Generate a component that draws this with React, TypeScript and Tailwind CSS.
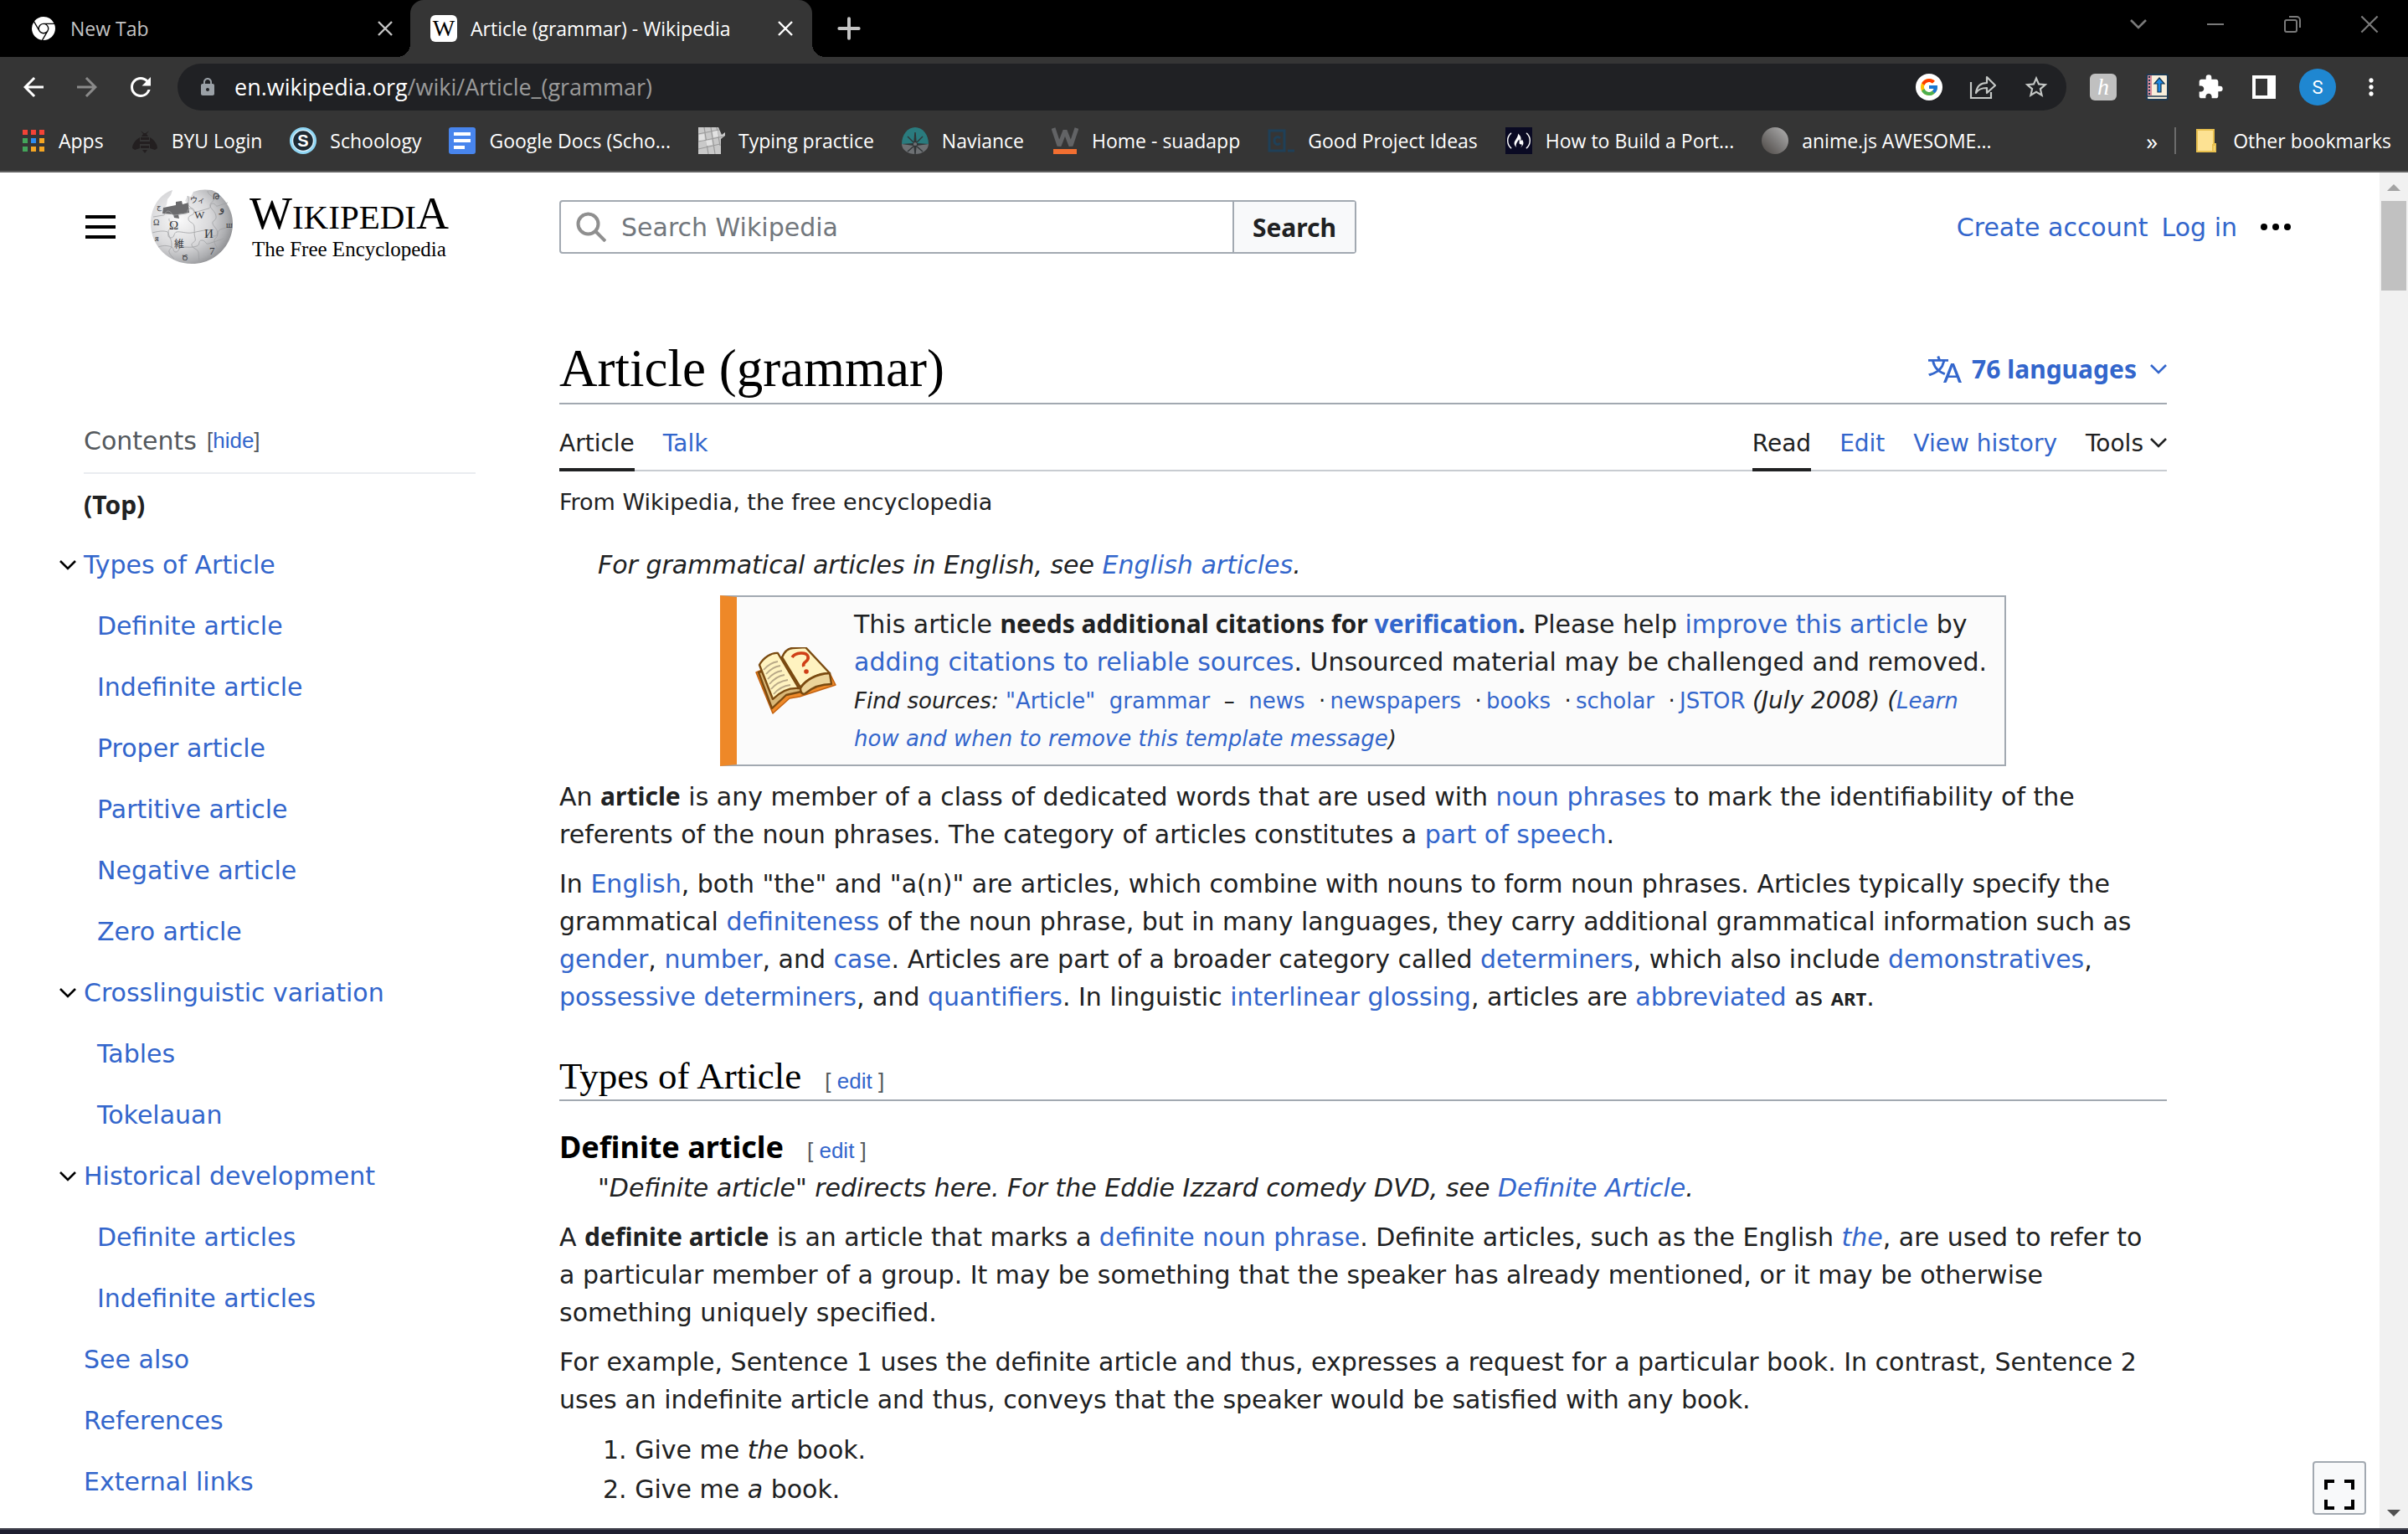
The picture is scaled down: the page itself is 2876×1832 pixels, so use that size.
import React from 'react'
import { FcGoogle } from 'react-icons/fc'
import { SiGooglechrome, SiFreecodecamp } from 'react-icons/si'
import { MdArrowBack, MdArrowForward, MdExtension, MdLock, MdMoreVert, MdRefresh, MdStarBorder } from 'react-icons/md'

interface LinkProps {
  children: React.ReactNode
  className?: string
}

const A: React.FC<LinkProps> = ({ children, className = '' }) => (
  <a href="#" className={`text-[#3366cc] hover:underline ${className}`}>
    {children}
  </a>
)

const B: React.FC<LinkProps> = ({ children }) => (
  <b className="font-['Noto_Sans',sans-serif] text-[30px] leading-none font-bold">{children}</b>
)

const Chevron: React.FC<{ className?: string }> = ({ className = '' }) => (
  <svg className={className} viewBox="0 0 20 12" fill="none" stroke="currentColor" strokeWidth={2.6}>
    <path d="M1 1l9 9 9-9" />
  </svg>
)

const Cross: React.FC<{ className?: string; width?: number }> = ({ className = '', width = 2.4 }) => (
  <svg className={className} viewBox="0 0 20 20" fill="none" stroke="currentColor" strokeWidth={width}>
    <path d="M2 2l16 16M18 2L2 18" />
  </svg>
)

/* ---------- bookmark icons ---------- */

const AppsIcon = () => (
  <svg viewBox="0 0 28 28" className="h-7 w-7">
    {['#f44336', '#f44336', '#f44336', '#43a55a', '#2d8cf0', '#f5a623', '#43a55a', '#f5a623', '#f5a623'].map((c, i) => (
      <rect key={i} x={(i % 3) * 10 + 1} y={Math.floor(i / 3) * 10 + 1} width={6} height={6} fill={c} />
    ))}
  </svg>
)

const BeeIcon = () => (
  <svg viewBox="0 0 32 32" className="h-8 w-8" fill="#231f20">
    <path d="M11 4l3 4-2 3h8l-2-3 3-4-4 3h-2z" />
    <path d="M10 12C5 15 1 20 1 25l3 2 6-2zM22 12c5 3 9 8 9 13l-3 2-6-2z" />
    <path d="M11 12h10v3H11zM10 17h12v3H10zM11 22h10v3H11zM13 27h6l-3 4z" />
  </svg>
)

const SchoologyIcon = () => (
  <svg viewBox="0 0 32 32" className="h-8 w-8">
    <circle cx="16" cy="16" r="16" fill="#8fd6f4" />
    <circle cx="16" cy="16" r="12.5" fill="#1f2a33" stroke="#d5eefa" strokeWidth="1.5" />
    <text x="16" y="23" fontSize="20" fontWeight="bold" textAnchor="middle" fill="#fff" fontFamily="Liberation Sans, sans-serif">S</text>
  </svg>
)

const DocsIcon = () => (
  <svg viewBox="0 0 32 32" className="h-8 w-8">
    <rect width="32" height="32" rx="3" fill="#4885ed" />
    <path d="M6 6h20v4H6zM6 14h20v4H6zM6 22h13v4H6z" fill="#fff" />
  </svg>
)

const KeysIcon = () => (
  <svg viewBox="0 0 32 32" className="h-8 w-8">
    <rect width="32" height="32" fill="#c9c9c9" />
    <path d="M0 8l30-6M0 17l30-6M0 26l26-6M7 0l5 32M15 0l5 32M22 0l4 22" stroke="#9a9a9a" strokeWidth="1.2" />
    <path d="M1 9l6-1 1 7-7 1zM9 16l7-1 1 6-7 1zM17 5l6-1 1 7-6 1z" fill="#e2e2e2" />
    <path d="M24 0h8v6l-4 3zM27 14l5-4v22h-5z" fill="#353535" />
  </svg>
)

const NavianceIcon = () => (
  <svg viewBox="0 0 32 32" className="h-8 w-8">
    <path d="M0 20a16 20 0 0132 0z" fill="#2a7b7e" />
    <path d="M0 20h32a16 12 0 01-32 0z" fill="#6d7073" />
    <path d="M16 6l1 12-1 2-1-2zM7 11l8 8M25 11l-8 8M16 32l1-10h-2zM7 29l8-7M25 29l-8-7" fill="#303436" stroke="#303436" strokeWidth="1.4" />
    <path d="M0 20l14-1v3zM32 20l-14-1v3z" fill="#303436" />
    <circle cx="16" cy="20" r="2" fill="#6d7073" />
  </svg>
)

const WeeblyIcon = () => (
  <svg viewBox="0 0 32 32" className="h-8 w-8">
    <path d="M2 1l7 21 7-18 7 18 7-21" fill="none" stroke="#626365" strokeWidth="5" strokeLinejoin="bevel" />
    <rect x="2" y="26" width="28" height="6" fill="#f26f31" />
  </svg>
)

const CodecademyIcon = () => (
  <svg viewBox="0 0 32 32" className="h-8 w-8" fill="none" stroke="#1f4058" strokeWidth="3">
    <rect x="2" y="4" width="18" height="24" />
    <path d="M15 13c-3-3-7-1-7 3s4 6 7 3M24 28h8" />
  </svg>
)

const CampIcon = () => (
  <span className="flex h-8 w-8 items-center justify-center bg-[#0a0a23]">
    <SiFreecodecamp className="h-7 w-7 text-white" />
  </span>
)

const SphereIcon = () => <span className="h-8 w-8 rounded-full bg-linear-to-bl from-[#b4b4b4] via-[#7d7b7a] to-[#4b4643]" />

const bookmarks = [
  { label: 'Apps', icon: <AppsIcon /> },
  { label: 'BYU Login', icon: <BeeIcon /> },
  { label: 'Schoology', icon: <SchoologyIcon /> },
  { label: 'Google Docs (Scho...', icon: <DocsIcon /> },
  { label: 'Typing practice', icon: <KeysIcon /> },
  { label: 'Naviance', icon: <NavianceIcon /> },
  { label: 'Home - suadapp', icon: <WeeblyIcon /> },
  { label: 'Good Project Ideas', icon: <CodecademyIcon /> },
  { label: 'How to Build a Port...', icon: <CampIcon /> },
  { label: 'anime.js AWESOME...', icon: <SphereIcon /> },
]

/* ---------- browser chrome ---------- */

const TabStrip = () => (
  <div className="flex h-[68px] items-stretch justify-between bg-black">
    <div className="flex items-stretch">
      <div className="flex w-[490px] items-center pr-3.5 pl-[38px] text-[#c4c4c4]">
        <span className="flex h-8 w-8 items-center">
          <SiGooglechrome className="h-7 w-7 text-white" />
        </span>
        <span className="ml-3.5 flex-1">New Tab</span>
        <button type="button" aria-label="Close New Tab" className="flex h-8 w-8 items-center justify-center">
          <Cross className="h-5 w-5" />
        </button>
      </div>
      <div className="relative flex w-[480px] items-center rounded-t-2xl bg-[#353535] pr-4 pl-6 text-white">
        <span className="absolute bottom-0 -left-4 h-4 w-4 bg-[radial-gradient(circle_at_0_0,transparent_16px,#353535_16px)]" />
        <span className="absolute -right-4 bottom-0 h-4 w-4 bg-[radial-gradient(circle_at_100%_0,transparent_16px,#353535_16px)]" />
        <span className="flex h-8 w-8 items-center justify-center rounded-md bg-white font-['Liberation_Serif',serif] text-[28px] text-black">
          W
        </span>
        <span className="ml-4 flex-1 whitespace-nowrap">Article (grammar) - Wikipedia</span>
        <button type="button" aria-label="Close tab" className="flex h-8 w-8 items-center justify-center">
          <Cross className="h-5 w-5" />
        </button>
      </div>
      <button type="button" aria-label="New tab" className="ml-7 flex w-8 items-center justify-center">
        <svg viewBox="0 0 24 24" className="h-7 w-7" stroke="#c4c4c4" strokeWidth="3.4" strokeLinecap="round">
          <path d="M12 2v20M2 12h20" />
        </svg>
      </button>
    </div>
    <div className="flex h-[58px] text-[#7a7a7a]">
      <button type="button" aria-label="Search tabs" className="flex w-[92px] items-center justify-center">
        <Chevron className="h-3 w-5" />
      </button>
      <button type="button" aria-label="Minimize" className="flex w-[92px] items-center justify-center">
        <span className="h-0.5 w-5 bg-[#7a7a7a]" />
      </button>
      <button type="button" aria-label="Restore" className="flex w-[92px] items-center justify-center">
        <svg viewBox="0 0 22 22" className="h-[22px] w-[22px]" fill="none" stroke="currentColor" strokeWidth="2">
          <rect x="2" y="6" width="14" height="14" rx="2" />
          <path d="M7 2h9a4 4 0 014 4v9" />
        </svg>
      </button>
      <button type="button" aria-label="Close window" className="flex w-[92px] items-center justify-center">
        <Cross className="h-6 w-6" width={1.8} />
      </button>
    </div>
  </div>
)

const Toolbar = () => (
  <div className="flex h-[72px] items-center pl-[22px]">
    <div className="flex w-[190px] items-center gap-7 text-white">
      <button type="button" aria-label="Back">
        <MdArrowBack className="h-9 w-9" />
      </button>
      <button type="button" aria-label="Forward" className="text-[#8a8a8a]">
        <MdArrowForward className="h-9 w-9" />
      </button>
      <button type="button" aria-label="Reload">
        <MdRefresh className="h-9 w-9" />
      </button>
    </div>
    <div className="flex h-14 flex-1 items-center rounded-full bg-[#202124] pr-5 pl-6">
      <MdLock className="h-6 w-6 text-[#9aa0a6]" />
      <span className="ml-5 flex-1 text-[27px] text-[#9a9a9a]">
        <span className="text-white">en.wikipedia.org</span>/wiki/Article_(grammar)
      </span>
      <div className="flex items-center gap-8">
        <button type="button" aria-label="Google" className="flex h-8 w-8 items-center justify-center rounded-full bg-white">
          <FcGoogle className="h-6 w-6" />
        </button>
        <button type="button" aria-label="Share">
          <svg viewBox="0 0 32 32" className="h-8 w-8" fill="none" stroke="#c4c7c5" strokeWidth="2.2">
            <path d="M2 10v19h24v-7" />
            <path d="M8 23c1-8 5-12 13-12V4l10 10-10 9v-6c-6 0-10 1-13 6z" strokeLinejoin="round" />
          </svg>
        </button>
        <button type="button" aria-label="Bookmark this tab">
          <MdStarBorder className="h-8 w-8 text-[#c4c7c5]" />
        </button>
      </div>
    </div>
    <div className="flex items-center gap-8 px-7">
      <button
        type="button"
        aria-label="Honey"
        className="flex h-8 w-8 items-center justify-center rounded-md bg-[#c0c0c0] font-['Liberation_Serif',serif] text-[28px] leading-none text-white italic"
      >
        h
      </button>
      <button type="button" aria-label="Notebook">
        <svg viewBox="0 0 32 32" className="h-8 w-8">
          <rect x="4" y="1" width="25" height="30" rx="2" fill="#f8efdc" stroke="#1e3a52" strokeWidth="2" />
          <path d="M5 27h24" stroke="#1e3a52" strokeWidth="1.5" />
          <rect x="5" y="2" width="5" height="24" fill="#d98c9c" />
          <path d="M7 3v23" stroke="#1e3a52" strokeWidth="2" strokeDasharray="2 2" />
          <path d="M19 5l6 7h-4v10h-4V12h-4z" fill="#1e88e5" stroke="#12344f" strokeWidth="1.2" />
        </svg>
      </button>
      <button type="button" aria-label="Extensions">
        <MdExtension className="h-8 w-8 text-white" />
      </button>
      <button type="button" aria-label="Side panel" className="flex h-8 w-8 items-center justify-center">
        <span className="h-7 w-7 border-4 border-r-[10px] border-white" />
      </button>
      <button
        type="button"
        aria-label="Profile"
        className="-mx-1.5 flex h-11 w-11 items-center justify-center rounded-full bg-[#1f87d1] font-['Roboto',sans-serif] text-[22px] text-white"
      >
        S
      </button>
      <button type="button" aria-label="Menu">
        <MdMoreVert className="h-9 w-8 text-white" />
      </button>
    </div>
  </div>
)

const BookmarkBar = () => (
  <div className="flex h-[66px] items-start border-b-2 border-[#5f5f5f] pr-5 pl-[26px] whitespace-nowrap text-white">
    <div className="flex flex-1 items-center gap-[33px]">
      {bookmarks.map((b) => (
        <a key={b.label} href="#" className="flex h-14 items-center gap-4">
          {b.icon}
          {b.label}
        </a>
      ))}
    </div>
    <div className="flex h-14 items-center">
      <button type="button" aria-label="More bookmarks" className="text-[28px]">
        »
      </button>
      <span className="mr-6 ml-5 h-8 w-0.5 bg-[#6b6b6b]" />
      <a href="#" className="flex items-center gap-5">
        <svg viewBox="0 0 24 28" className="h-7 w-6">
          <path d="M1 1h20v17h2v9H1z" fill="#fde293" stroke="#e8c04f" strokeWidth="2" />
          <path d="M20 27v-8h3" fill="none" stroke="#e8c04f" strokeWidth="2" />
        </svg>
        Other bookmarks
      </a>
    </div>
  </div>
)

/* ---------- wiki page ---------- */

const Globe = () => (
  <svg viewBox="0 0 98 90" className="h-[90px] w-[98px]">
    <defs>
      <radialGradient id="globe" cx="0.35" cy="0.4" r="0.68">
        <stop offset="0" stopColor="#fafafa" />
        <stop offset="0.55" stopColor="#d9d9db" />
        <stop offset="0.85" stopColor="#adaeb1" />
        <stop offset="1" stopColor="#8e8f92" />
      </radialGradient>
    </defs>
    <path
      d="M26 1l-2 6-4 5-1 7-4 4 2 7 29-3 1-8-6-5 3-6 4 1 3-6c8-3 14-3 22-2l4 2C88 10 98 24 98 41c0 27-22 48-49 48S0 68 0 41C0 22 10 6 26 1z"
      fill="url(#globe)"
    />
    <path d="M15 22l15-3v-4l7-1 1 4 7-2 1 12-13 2 1 5-6-1-1-4-13-1z" fill="#6b6b6d" />
    <g fill="none" stroke="#a0a1a3" strokeWidth="0.8">
      <path d="M2 52c10-3 16-2 18-1s-1 7 4 7 3-6 7-7 12 2 18 1 16-4 21-3 1 7 6 7 3-6 7-8l14-4" />
      <path d="M3 33l12-2c3 0 2-5 6-5s3 5 7 5l14-2c3 0 1-6 5-6s4 5 8 4l14-4c4-1 1-6 5-6s3 4 6 3l12-4" />
      <path d="M9 69c8-3 13-1 16 0s1 6 5 6 3-6 8-6 12 1 17-1 1-7 6-7 4 5 8 4l18-6" />
      <path d="M22 35c-1 5 5 4 5 8s-6 3-6 8 4 8 4 15-4 5-3 9 5 6 6 9" />
      <path d="M44 8c3 5-1 8 2 12s6 2 6 7-7 3-7 8 6 4 7 9-1 8 1 14-5 5-4 9 7 4 8 8l1 13" />
      <path d="M68 2c1 6 6 5 7 9s-5 5-4 9 6 6 7 12-5 5-4 9 6 6 6 12-5 5-4 10 4 5 3 10l-6 9" />
    </g>
    <g fill="#35363a" fontFamily="Liberation Serif, Noto Sans CJK JP, serif">
      <text x="22" y="48" fontSize="15">Ω</text>
      <text x="52" y="35" fontSize="13">W</text>
      <text x="64" y="58" fontSize="15">И</text>
      <text x="28" y="70" fontSize="12">維</text>
      <text x="47" y="16" fontSize="9">ウィ</text>
      <text x="70" y="78" fontSize="13">7</text>
      <text x="7" y="24" fontSize="9">ج</text>
      <text x="82" y="27" fontSize="13">و</text>
      <text x="3" y="43" fontSize="10">Ω</text>
      <text x="5" y="62" fontSize="10">я</text>
      <text x="37" y="85" fontSize="9">Ծ</text>
      <text x="90" y="46" fontSize="10">ш</text>
      <text x="74" y="12" fontSize="10">Թ</text>
    </g>
  </svg>
)

const SiteHeader = () => (
  <header className="flex items-center pr-[106px] pl-[100px]">
    <button type="button" aria-label="Main menu" className="flex w-10 flex-col gap-2 px-0.5">
      <span className="h-1 bg-black" />
      <span className="h-1 bg-black" />
      <span className="h-1 bg-black" />
    </button>
    <a href="#" className="ml-10 flex w-[488px] items-center gap-5 font-['Liberation_Serif',serif] whitespace-nowrap text-black">
      <Globe />
      <span className="flex flex-col items-center">
        <span className="text-[41px] leading-[46px]">
          <span className="text-[54px] leading-none">W</span>IKIPEDI<span className="text-[54px] leading-none">A</span>
        </span>
        <span className="text-[25px] leading-8">The Free Encyclopedia</span>
      </span>
    </a>
    <form className="flex h-16 w-[952px] rounded-sm border-2 border-[#a2a9b1]">
      <label className="flex flex-1 items-center pl-[18px]">
        <svg viewBox="0 0 36 36" className="h-9 w-9" fill="none" stroke="#8f8f8f" strokeWidth="4">
          <circle cx="14.5" cy="14.5" r="12" />
          <path d="M23 23l12 12" />
        </svg>
        <input
          type="search"
          aria-label="Search Wikipedia"
          placeholder="Search Wikipedia"
          className="ml-[18px] flex-1 bg-transparent outline-none placeholder:text-[#72777d]"
        />
      </label>
      <button type="submit" className="w-[146px] border-l-2 border-[#a2a9b1] bg-[#f8f9fa] font-['Noto_Sans',sans-serif] font-bold">
        Search
      </button>
    </form>
    <nav className="flex flex-1 items-center justify-end gap-4">
      <A>Create account</A>
      <A>Log in</A>
      <button type="button" aria-label="Personal tools" className="ml-3 flex gap-1.5">
        <span className="h-2 w-2 rounded-full bg-black" />
        <span className="h-2 w-2 rounded-full bg-black" />
        <span className="h-2 w-2 rounded-full bg-black" />
      </button>
    </nav>
  </header>
)

const contents = [
  { label: 'Types of Article', children: ['Definite article', 'Indefinite article', 'Proper article', 'Partitive article', 'Negative article', 'Zero article'] },
  { label: 'Crosslinguistic variation', children: ['Tables', 'Tokelauan'] },
  { label: 'Historical development', children: ['Definite articles', 'Indefinite articles'] },
  { label: 'See also', children: [] },
  { label: 'References', children: [] },
  { label: 'External links', children: [] },
]

const Sidebar = () => (
  <nav aria-label="Contents" className="w-[668px] shrink-0 pt-24 pr-[100px] pl-[70px]">
    <div className="ml-[30px] flex h-[70px] items-center gap-3 border-b-2 border-[#eaecf0] pb-2 text-[#54595d]">
      Contents
      <span className="font-['Liberation_Sans',sans-serif] text-[26px]">
        [<button type="button" className="text-[#3366cc]">hide</button>]
      </span>
    </div>
    <a href="#" className="ml-[30px] flex h-[72px] items-center font-['Noto_Sans',sans-serif] font-bold">
      (Top)
    </a>
    <ul>
      {contents.map((c) => (
        <li key={c.label}>
          <div className="flex h-[73px] items-center">
            <span className="w-[30px]">
              {c.children.length > 0 && (
                <button type="button" aria-label={`Toggle ${c.label}`} className="flex">
                  <Chevron className="h-3 w-[22px] text-black" />
                </button>
              )}
            </span>
            <A>{c.label}</A>
          </div>
          {c.children.length > 0 && (
            <ul className="pl-[46px]">
              {c.children.map((s) => (
                <li key={s} className="flex h-[73px] items-center">
                  <A>{s}</A>
                </li>
              ))}
            </ul>
          )}
        </li>
      ))}
    </ul>
  </nav>
)

const EditLink = () => (
  <span className="ml-7 font-['Liberation_Sans',sans-serif] text-[26px] leading-none font-normal text-[#54595d]">
    [ <A>edit</A> ]
  </span>
)

const BookIcon = () => (
  <svg viewBox="0 0 100 80" className="h-20 w-[100px] shrink-0" strokeLinejoin="round">
    <path d="M3 30L23 79l20-18 12-2 43-14-6-12-60-15z" fill="#ee8a2a" stroke="#c4620f" strokeWidth="1.5" />
    <path d="M6 30l16 43 17-16 18-4 2-9-30-20z" fill="#d9b777" stroke="#7a4a10" strokeWidth="2.4" />
    <path d="M7 21C12 12 22 6 29 7l25 42c-12-1-22 4-31 13z" fill="#fff3c0" stroke="#7a4a10" strokeWidth="2.4" />
    <path d="M34 12c3-7 8-11 13-11l15-1 29 31c-13 0-27 6-35 17z" fill="#fff3c0" stroke="#7a4a10" strokeWidth="2.4" />
    <path d="M56 49c6-10 19-17 35-18l2 13c-14 0-24 5-31 11-3 2-6 0-6-6z" fill="#ecd49a" stroke="#7a4a10" strokeWidth="2.4" />
    <path
      d="M12 27c5-6 11-9 17-10M15 32c5-6 11-9 17-10M17 38c5-6 11-9 17-10M19 44c5-6 12-10 18-11M21 50c5-6 13-10 20-11M24 56c5-6 12-10 20-11"
      fill="none"
      stroke="#b9a988"
      strokeWidth="1.8"
    />
    <path d="M46 12c4-6 17-7 19-1 2 7-8 6-5 12" fill="none" stroke="#cf3f16" strokeWidth="3.6" />
    <circle cx="63" cy="29" r="2.8" fill="#cf3f16" />
  </svg>
)

const CitationNotice = () => (
  <div className="mx-[10%] mt-3.5 flex items-center border-2 border-l-20 border-[#a2a9b1] border-l-[#ee8828] bg-[#fbfbfb] py-2.5 pr-5 pl-5">
    <BookIcon />
    <p className="ml-5 flex-1">
      This article <B>needs additional citations for <A>verification</A>.</B> Please help <A>improve this article</A> by{' '}
      <A>adding citations to reliable sources</A>. Unsourced material may be challenged and removed.
      <br />
      <span className="text-[26px] leading-none">
        <i>Find sources:</i>&nbsp;<A>"Article"&nbsp; grammar</A>&nbsp; –&nbsp; <A>news</A>&nbsp; ·&thinsp;<A>newspapers</A>&nbsp; ·&thinsp;
        <A>books</A>&nbsp; ·&thinsp;<A>scholar</A>&nbsp; ·&thinsp;<A>JSTOR</A>{' '}
        <i>
          <span className="text-[28px] leading-none">(July 2008) (</span>
          <A>
            Learn
            <br />
            how and when to remove this template message
          </A>
          )
        </i>
      </span>
    </p>
  </div>
)

const Article = () => (
  <main className="min-w-0 flex-1 pr-[254px]">
    <div className="flex h-[83px] items-center justify-between border-b-2 border-[#a2a9b1]">
      <h1 className="font-['Liberation_Serif',serif] text-[63px] leading-none text-black">Article (grammar)</h1>
      <button type="button" className="flex items-center gap-3 font-['Noto_Sans',sans-serif] font-bold text-[#3366cc]">
        <svg viewBox="0 0 20 20" className="h-10 w-10" fill="currentColor">
          <path d="M20 18h-1.44a.6.6 0 01-.4-.12.8.8 0 01-.23-.31L17 15h-5l-1 2.54a.8.8 0 01-.22.3.6.6 0 01-.4.14H9l4.55-11.47h1.89zm-3.53-4.31L14.89 9.5a12 12 0 01-.39-1.24q-.09.37-.19.69l-.19.56-1.58 4.19zm-6.3-1.58a13.4 13.4 0 01-2.91-1.41 11.46 11.46 0 002.81-5.37H12V4H7.31a4 4 0 00-.2-.56C6.87 2.79 6.6 2 6.6 2l-1.47.5s.4.89.6 1.5H0v1.33h2.15A11.23 11.23 0 005 10.7a17.2 17.2 0 01-5 2.1q.56.82.87 1.38a23.3 23.3 0 005.22-2.51 15.6 15.6 0 003.56 1.77zM3.63 5.33h4.91a8.11 8.11 0 01-2.45 4.45 9.11 9.11 0 01-2.46-4.45z" />
        </svg>
        76 languages
        <Chevron className="ml-1 h-3 w-5" />
      </button>
    </div>
    <div className="flex h-20 items-stretch justify-between border-b-2 border-[#c8ccd1] text-[28px]">
      <nav className="flex gap-[34px]">
        <a href="#" className="-mb-0.5 flex items-center border-b-4 border-[#202122] pt-4">Article</a>
        <A className="flex items-center pt-3.5">Talk</A>
      </nav>
      <nav className="flex gap-[34px]">
        <a href="#" className="-mb-0.5 flex items-center border-b-4 border-[#202122] pt-4">Read</a>
        <A className="flex items-center pt-3.5">Edit</A>
        <A className="flex items-center pt-3.5">View history</A>
        <button type="button" className="flex items-center gap-2 pt-3.5">
          Tools
          <Chevron className="h-3 w-5" />
        </button>
      </nav>
    </div>
    <p className="mt-3.5 text-[27px]">From Wikipedia, the free encyclopedia</p>
    <p className="mt-[30px] pl-[46px] italic">
      For grammatical articles in English, see <A>English articles</A>.
    </p>
    <CitationNotice />
    <p className="mt-3.5 pr-4">
      An <B>article</B> is any member of a class of dedicated words that are used with <A>noun phrases</A> to mark the identifiability of the
      referents of the noun phrases. The category of articles constitutes a <A>part of speech</A>.
    </p>
    <p className="mt-3.5 pr-4">
      In <A>English</A>, both "the" and "a(n)" are articles, which combine with nouns to form noun phrases. Articles typically specify the
      grammatical <A>definiteness</A> of the noun phrase, but in many languages, they carry additional grammatical information such as{' '}
      <A>gender</A>, <A>number</A>, and <A>case</A>. Articles are part of a broader category called <A>determiners</A>, which also include{' '}
      <A>demonstratives</A>, <A>possessive determiners</A>, and <A>quantifiers</A>. In linguistic <A>interlinear glossing</A>, articles are{' '}
      <A>abbreviated</A> as <span className="font-['Noto_Sans',sans-serif] text-[22px] leading-none font-bold">ART</span>.
    </p>
    <h2 className="mt-11 border-b-2 border-[#a2a9b1] font-['Liberation_Serif',serif] text-[45px] leading-[56px] text-black">
      Types of Article
      <EditLink />
    </h2>
    <h3 className="mt-8 font-['Noto_Sans',sans-serif] text-[36px] font-bold text-black">
      Definite article
      <EditLink />
    </h3>
    <p className="mt-1 pl-[46px] italic">
      "Definite article" redirects here. For the Eddie Izzard comedy DVD, see <A>Definite Article</A>.
    </p>
    <p className="mt-3.5 pr-4">
      A <B>definite article</B> is an article that marks a <A>definite noun phrase</A>. Definite articles, such as the English{' '}
      <A className="italic">the</A>, are used to refer to a particular member of a group. It may be something that the speaker has already
      mentioned, or it may be otherwise something uniquely specified.
    </p>
    <p className="mt-3.5 pr-4">
      For example, Sentence 1 uses the definite article and thus, expresses a request for a particular book. In contrast, Sentence 2 uses an
      indefinite article and thus, conveys that the speaker would be satisfied with any book.
    </p>
    <ol className="mt-3.5 list-inside list-decimal pl-[52px] leading-[47px]">
      <li>
        Give me <i>the</i> book.
      </li>
      <li>
        Give me <i>a</i> book.
      </li>
    </ol>
  </main>
)

const Scrollbar = () => (
  <div className="flex w-[34px] shrink-0 flex-col items-center justify-between bg-[#f1f1f1] py-3.5">
    <div className="flex flex-col items-center gap-3">
      <span className="h-0 w-0 border-x-8 border-b-8 border-x-transparent border-b-[#a3a3a3]" />
      <span className="h-[107px] w-[30px] bg-[#c1c1c1]" />
    </div>
    <span className="h-0 w-0 border-x-8 border-t-8 border-x-transparent border-t-[#505050]" />
  </div>
)

export default function App() {
  return (
    <div className="flex h-screen flex-col overflow-hidden bg-white">
      <div className="shrink-0 bg-[#353535] font-['Open_Sans',sans-serif] text-[23px]">
        <TabStrip />
        <Toolbar />
        <BookmarkBar />
      </div>
      <div className="flex min-h-0 flex-1">
        <div className="relative flex-1 overflow-hidden pt-5 font-['DejaVu_Sans',sans-serif] text-[30px] leading-[45px] text-[#202122]">
          <SiteHeader />
          <div className="mt-[84px] flex items-start">
            <Sidebar />
            <Article />
          </div>
          <button
            type="button"
            aria-label="Toggle limited content width"
            className="absolute right-4 bottom-4 flex h-16 w-16 items-end justify-center rounded-sm border-2 border-[#a2a9b1] bg-[#f8f9fa] pb-1"
          >
            <svg viewBox="0 0 36 36" className="h-9 w-9" fill="none" stroke="#000" strokeWidth="4">
              <path d="M2 12V2h10M24 2h10v10M2 24v10h10M34 24v10H24" />
            </svg>
          </button>
        </div>
        <Scrollbar />
      </div>
      <div className="h-[7px] shrink-0 border-t-2 border-[#44454f] bg-[#1d1d2f]" />
    </div>
  )
}
